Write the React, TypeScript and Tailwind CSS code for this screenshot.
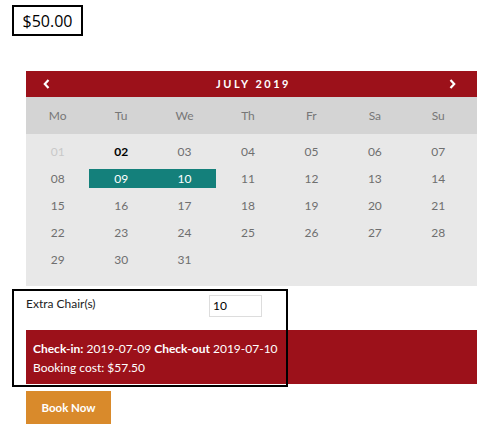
import React from "react";

const dayNames = ["Mo", "Tu", "We", "Th", "Fr", "Sa", "Su"];

const weeks: (string | null)[][] = [
  ["01", "02", "03", "04", "05", "06", "07"],
  ["08", "09", "10", "11", "12", "13", "14"],
  ["15", "16", "17", "18", "19", "20", "21"],
  ["22", "23", "24", "25", "26", "27", "28"],
  ["29", "30", "31", null, null, null, null],
];

const Chevron = ({ dir }: { dir: "left" | "right" }) => (
  <svg width="7" height="10" viewBox="0 0 7 10">
    <path
      d={dir === "left" ? "M5.5 1 L1.8 5 L5.5 9" : "M1.5 1 L5.2 5 L1.5 9"}
      fill="none"
      stroke="white"
      strokeWidth="2.2"
    />
  </svg>
);

const DayCell = ({ day }: { day: string | null }) => {
  if (!day) return <div className="h-[19px]" />;
  if (day === "01")
    return <div className="h-[19px] flex items-center justify-center text-[#c8c8c8]">{day}</div>;
  if (day === "02")
    return <div className="h-[19px] flex items-center justify-center font-bold text-black">{day}</div>;
  if (day === "09" || day === "10")
    return (
      <div className="h-[19px] flex items-center justify-center bg-[#14807b] text-white">{day}</div>
    );
  return <div className="h-[19px] flex items-center justify-center text-[#6f6f6f]">{day}</div>;
};

const Calendar = () => {
  return (
    <div className="w-[451px] bg-[#e8e8e8]">
      <div className="h-[26px] bg-[#9c111a] flex items-center justify-between pl-[17px] pr-[21px] text-white">
        <Chevron dir="left" />
        <span className="text-[11px] font-bold tracking-[2.5px] pl-[8px]">JULY 2019</span>
        <Chevron dir="right" />
      </div>
      <div className="h-[37px] bg-[#d4d4d4]">
        <div className="h-full grid grid-cols-7 w-[444px] text-[12px] text-[#777]">
          {dayNames.map((d) => (
            <div key={d} className="flex items-center justify-center">
              {d}
            </div>
          ))}
        </div>
      </div>
      <div className="pt-[8px] pb-[17px]">
        <div className="grid grid-cols-7 gap-y-[8px] w-[444px] text-[12px]">
          {weeks.map((w, i) => w.map((d, j) => <DayCell key={`${i}-${j}`} day={d} />))}
        </div>
      </div>
    </div>
  );
};

export default function App() {
  return (
    <div className="w-[500px] h-[435px] bg-white font-['Lato','Open_Sans',sans-serif] relative">
      <div className="pt-[5px] pl-[12px]">
        <div className="w-[71px] h-[31px] border-2 border-black flex items-center justify-center text-[16px] text-black font-['Open_Sans',sans-serif]">
          $50.00
        </div>
      </div>
      <div className="pl-[26px] pt-[35px]">
        <Calendar />
        <div className="h-[44px] flex items-start pt-[9px] text-[12px] text-[#222]">
          <span className="w-[183px]">Extra Chair(s)</span>
          <div className="w-[53px] h-[22px] border border-[#ddd] bg-white flex items-center px-[3px] text-[12px] text-black mt-[0px]">
            10
          </div>
        </div>
        <div className="w-[451px] h-[54px] bg-[#9c111a] text-white text-[12px] px-[7px] pt-[9px] leading-[19px]">
          <div>
            <span className="font-bold">Check-in:</span> 2019-07-09{" "}
            <span className="font-bold">Check-out</span> 2019-07-10
          </div>
          <div>Booking cost: $57.50</div>
        </div>
        <div className="pt-[7px]">
          <button className="w-[85px] h-[33px] bg-[#d98a2b] text-white text-[11.5px] font-bold">
            Book Now
          </button>
        </div>
      </div>
      <div className="absolute left-[12px] top-[289px] w-[276px] h-[98px] border-2 border-black pointer-events-none" />
    </div>
  );
}
